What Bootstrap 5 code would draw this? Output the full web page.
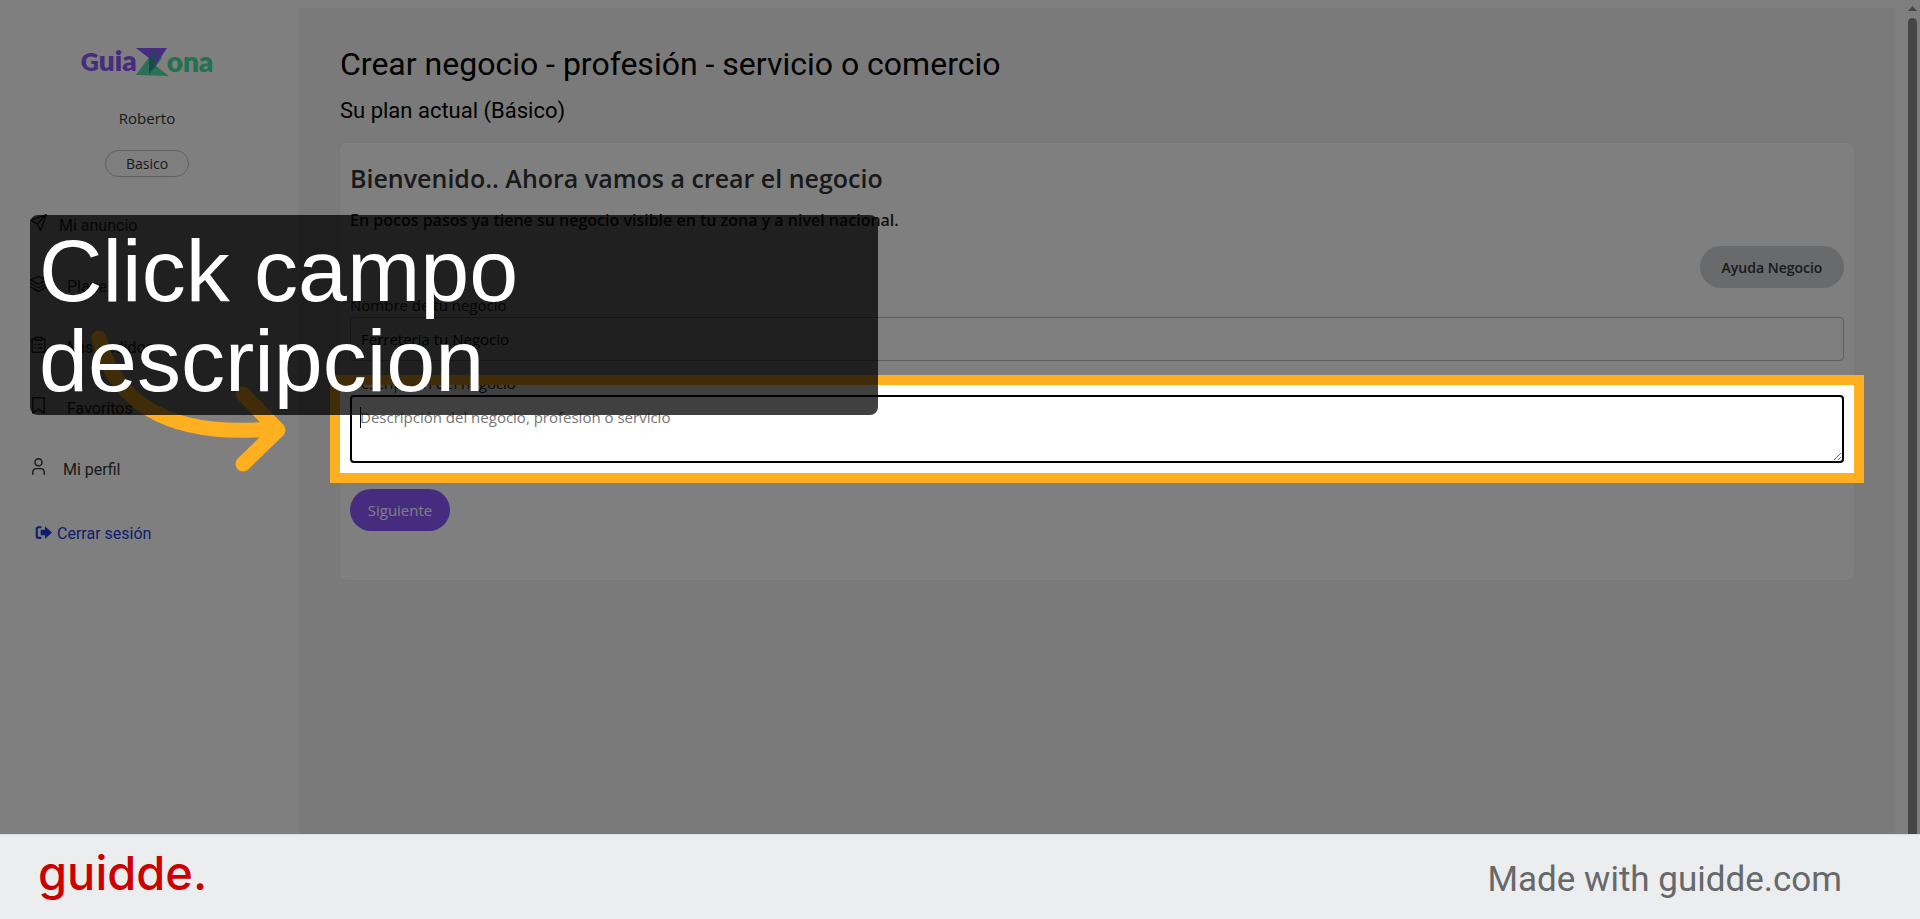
<!DOCTYPE html>
<html lang="es">
<head>
<meta charset="utf-8">
<meta name="viewport" content="width=device-width, initial-scale=1">
<title>GuiaZona - Crear negocio</title>
<link href="https://cdn.jsdelivr.net/npm/bootstrap@5.3.0/dist/css/bootstrap.min.css" rel="stylesheet">
<style>
  body { font-family: Roboto, sans-serif; font-size: 16px; line-height: 24px; color: #000; background: #fff; }
  .stage { overflow: hidden; }
  .segoe { font-family: "Open Sans", sans-serif; font-size: 15px; }
  /* sidebar */
  .side { width: 299px; padding: 46px 5px 0 0; }
  .brand { height: 32px; color: #8d58ff; font: 800 28px/28px Lato, sans-serif; text-decoration: none; }
  .brand .cap { font-size: 25px; }
  .brand .green { color: #44e2a0; }
  .brand svg { margin: 0 -2px; }
  .brand span { margin-top: -3px; }
  .user-name { margin-top: 28px; color: #333; }
  .plan-pill { margin-top: 20px; width: 84px; height: 27px; line-height: 25px; font-size: 14px; border: 1px solid #c0c0c0; color: #333; }
  .menu { margin-top: 37px; padding-left: 30px; }
  .menu a { height: 24px; margin-bottom: 37px; color: #333; text-decoration: none; }
  .menu svg { width: 17px; height: 17px; margin-top: -7px; fill: none; stroke: #333; stroke-width: 2; stroke-linecap: round; stroke-linejoin: round; }
  .menu .near { gap: 12px; }
  .menu .mid { gap: 16px; }
  .menu .far { gap: 20px; }
  .menu .logout { gap: 5px; margin-top: 40px; padding-left: 5px; color: #1a3be0; }
  .menu .logout svg { fill: #1a3be0; stroke: none; margin-top: -4px; }
  /* main column */
  .content { margin-top: 8px; padding: 36px 41px 0; background: #f4f4f4; }
  .content h1 { font-size: 32px; line-height: 40px; font-weight: 400; margin: 0 0 13px; }
  .content h2 { font-size: 22px; line-height: 28px; font-weight: 400; margin: 0 0 18px; }
  .panel { padding: 15px 10px 49px; background: #fff; border-radius: 6px; outline: 1px solid #f0f0f0; }
  .panel h3 { font-size: 25px; line-height: 40px; font-weight: 600; color: #333; margin: 0; }
  .lead-in { font-size: 16px; font-weight: 600; color: #222; margin: 10px 0 14px; }
  .pill { height: 42px; border: 0; border-radius: 21px; font-size: 15px; }
  .pill-help { width: 144px; background: #d0d4d8; color: #333; font-size: 14px; font-weight: 600; }
  .pill-next { width: 100px; margin-top: 26px; background: #8d58ff; color: #fff; }
  .fld { display: block; width: 100%; padding: 9px 10px; border: 1px solid #bbb; border-radius: 4px; color: #000; background: #fff; }
  .fld-name { height: 44px; }
  .fld-desc { height: 68px; border: 2px solid #000; outline: 0; padding: 8px; }
  .fld-desc::placeholder { color: #757575; opacity: 1; }
  .caret { left: 10px; top: 12px; width: 1px; height: 21px; background: #000; z-index: 1; }
  .lbl { line-height: 24px; color: #222; margin-top: 5px; }
  .lbl-desc { margin-top: 10px; }
  /* highlighted area: everything outside of it is dimmed */
  .spot { inset: -20px; z-index: 2; border: 10px solid #ffb020; box-shadow: 0 0 0 4000px rgba(0,0,0,.5); pointer-events: none; }
  .pointer { left: 86px; top: 325px; z-index: 3; fill: none; stroke: #ffb020; stroke-width: 15; stroke-linecap: round; stroke-linejoin: round; }
  .callout { left: 30px; top: 215px; width: 848px; z-index: 4; padding: 11px 9px 9px; border-radius: 8px; background: rgba(0,0,0,.75); color: #fff; font: 400 88px/90px "Liberation Sans", sans-serif; }
  /* scrollbar strip */
  .track { width: 15px; margin-left: 10px; padding-top: 6px; background: #fcfcfc; }
  .track i { width: 9px; background: #8b8b8b; border-radius: 5px 5px 0 0; margin-top: 7px; }
  .foot { height: 85px; padding: 0 78px 0 38px; background: #ecedef; border-top: 1px solid #dcdddf; }
  .foot-logo { font: 500 47px/56px Inter, sans-serif; color: #c00; text-decoration: none; margin-top: -8px; }
  .made { font-size: 35px; line-height: 44px; color: #66686a; margin-top: 6px; }
</style>
</head>
<body class="d-flex flex-column min-vh-100">
<main class="stage position-relative d-flex flex-grow-1">
  <aside class="side d-flex flex-column align-items-center flex-shrink-0">
    <a href="#" class="brand d-flex align-items-center"><span><span class="cap">G</span>uia</span>
      <svg width="34" height="30" viewBox="0 0 34 30"><path d="M20 2 1 28l33 1-13-10 6-8z" fill="#55e0a8"/><path d="M1 1h31L20 19l-6-8z" fill="#8d58ff"/><path d="M21 2 14 12v15l7-8z" fill="#3f93a0"/></svg>
      <span class="green">ona</span></a>
    <div class="user-name segoe">Roberto</div>
    <div class="plan-pill segoe rounded-pill text-center">Basico</div>
    <nav class="menu w-100">
      <a href="#" class="near d-flex align-items-center"><svg viewBox="0 0 24 24"><path d="M23 1 10 14M23 1l-8 22-5-9-9-5z"/></svg>Mi anuncio</a>
      <a href="#" class="far d-flex align-items-center"><svg viewBox="0 0 24 24"><path d="m12 2 11 5-11 6L1 7zM1 12l11 6 11-6M1 17l11 6 11-6"/></svg>Planes</a>
      <a href="#" class="far d-flex align-items-center"><svg viewBox="0 0 24 24"><path d="M7 4H3v19h18V4h-4M7 2h10v4H7zM7 12h1M12 12h5M7 17h1M12 17h5"/></svg>Mis pedidos</a>
      <a href="#" class="far d-flex align-items-center"><svg viewBox="0 0 24 24"><path d="M4 1h16v22l-8-6-8 6z"/></svg>Favoritos</a>
      <a href="#" class="mid d-flex align-items-center"><svg viewBox="0 0 24 24"><circle cx="12" cy="6" r="5"/><path d="M4 23v-3q0-5 5-5h6q5 0 5 5v3"/></svg>Mi perfil</a>
      <a href="#" class="logout d-flex align-items-center"><svg viewBox="0 0 24 24"><path d="M9 3v3H5q-1 0-1 1v10q0 1 1 1h4v3H5q-4 0-4-4V7q0-4 4-4zM14 3l10 9-10 9v-5H8V8h6z"/></svg>Cerrar sesión</a>
    </nav>
  </aside>
  <section class="content flex-grow-1">
    <h1>Crear negocio - profesión - servicio o comercio</h1>
    <h2>Su plan actual (Básico)</h2>
    <form class="panel segoe">
      <h3>Bienvenido.. Ahora vamos a crear el negocio</h3>
      <p class="lead-in">En pocos pasos ya tiene su negocio visible en tu zona y a nivel nacional.</p>
      <div class="d-flex justify-content-end"><button type="button" class="btn pill pill-help p-0">Ayuda Negocio</button></div>
      <label class="lbl d-block" for="nombre">Nombre de tu negocio</label>
      <input id="nombre" class="fld fld-name" type="text" value="Ferreteria tu Negocio">
      <label class="lbl lbl-desc d-block" for="descripcion">Descripción del negocio</label>
      <div class="position-relative">
        <textarea id="descripcion" class="fld fld-desc" placeholder="Descripción del negocio, profesion o servicio"></textarea>
        <span class="caret position-absolute"></span>
        <div class="spot position-absolute"></div>
      </div>
      <button type="button" class="btn pill pill-next p-0">Siguiente</button>
    </form>
  </section>
  <div class="track d-flex flex-column align-items-center flex-shrink-0" aria-hidden="true">
    <svg width="9" height="5" viewBox="0 0 18 10"><path d="M0 10 9 0l9 10z" fill="#8b8b8b"/></svg><i class="flex-grow-1"></i>
  </div>
  <svg class="pointer position-absolute" width="210" height="160" viewBox="86 325 210 160"><path d="M99 338C114 400 165 438 270 429M243 394l35 36-35 34"/></svg>
  <div class="callout position-absolute">Click campo<br>descripcion</div>
</main>
<footer class="foot d-flex align-items-center justify-content-between">
  <a href="#" class="foot-logo">guidde.</a>
  <div class="made">Made with guidde.com</div>
</footer>
<script src="https://cdn.jsdelivr.net/npm/bootstrap@5.3.0/dist/js/bootstrap.bundle.min.js"></script>
</body>
</html>
